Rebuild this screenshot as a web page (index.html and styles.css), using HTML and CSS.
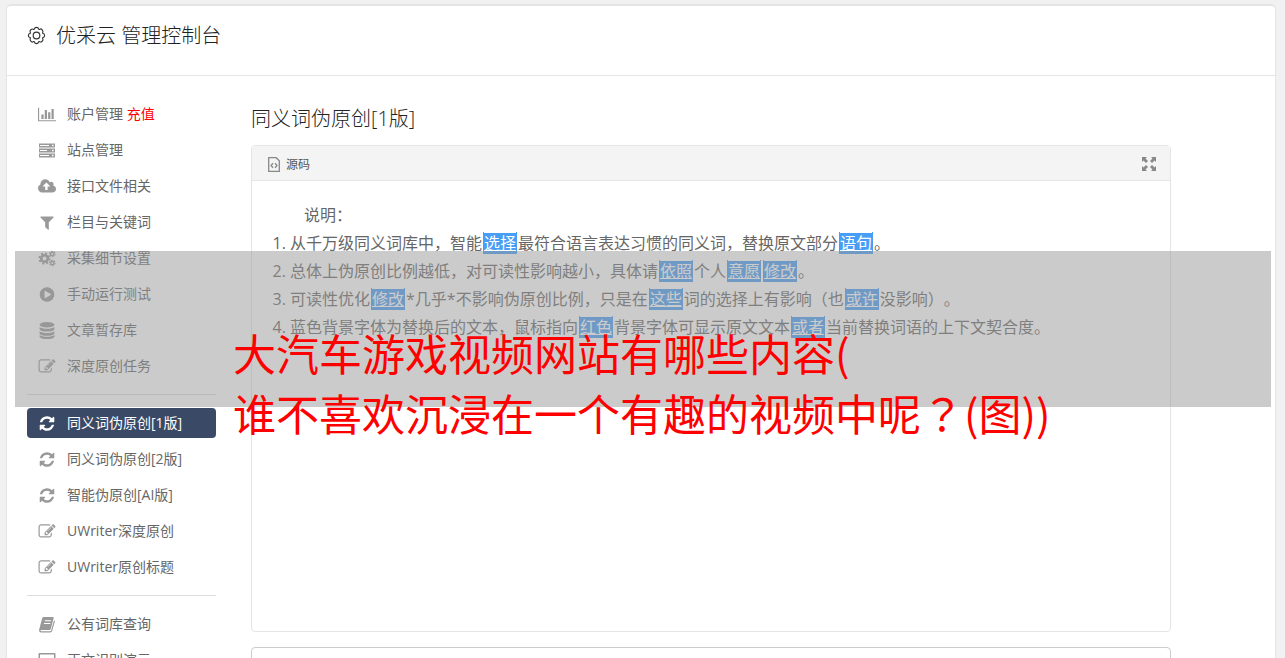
FILE: index.html
```
<!DOCTYPE html>
<html lang="zh-CN">
<head>
  <meta charset="UTF-8">
  <meta name="viewport" content="width=device-width, initial-scale=1.0">
  <title>优采云 管理控制台</title>
  <link rel="stylesheet" href="styles.css">
</head>
<body>
  <svg class="sprite" aria-hidden="true">
    <symbol id="i-chart" viewBox="0 0 2048 1792"><path d="M640 896v512h-256v-512h256zm384-512v1024h-256v-1024h256zm1024 1152v128h-2048v-1536h128v1408h1920zm-640-896v768h-256v-768h256zm384-384v1152h-256v-1152h256z"/></symbol>
    <symbol id="i-server" viewBox="0 0 18 14"><path fill-rule="evenodd" d="M1 0h16v4H1zM2 1.500v1h9v-1zM14 1.200v1.600h1.600V1.200zM1 5h16v4H1zM2 6.500v1h7v-1zM14 6.200v1.600h1.600V6.200zM1 10h16v4H1zM2 11.500v1h9v-1zM14 11.200v1.600h1.600v-1.600z"/></symbol>
    <symbol id="i-cloud" viewBox="-64 0 1920 1792"><path d="M1216 864q0-14-9-23l-352-352q-9-9-23-9t-23 9l-351 351q-10 12-10 24 0 14 9 23t23 9h224v352q0 13 9.500 22.500t22.500 9.500h192q13 0 22.500-9.500t9.500-22.500v-352h224q13 0 22.500-9.500t9.500-22.500zm640 288q0 159-112.500 271.500t-271.500 112.500h-1088q-185 0-316.500-131.500t-131.500-316.500q0-130 70-240t188-165q-2-30-2-43 0-212 150-362t362-150q156 0 285.500 87t188.500 231q71-62 166-62 106 0 181 75t75 181q0 76-41 138 130 31 213.500 135.500t83.500 238.500z"/></symbol>
    <symbol id="i-filter" viewBox="0 0 1792 1792"><path d="M1595 295q17 41-14 70l-493 493v742q0 42-39 59-13 5-25 5-27 0-45-19l-256-256q-19-19-19-45v-486l-493-493q-31-29-14-70 17-39 59-39h1280q42 0 59 39z"/></symbol>
    <symbol id="i-gears" viewBox="0 0 18 16">
      <g fill="none" stroke="currentColor">
        <circle cx="6.500" cy="8" r="3.300" stroke-width="2.600"/>
        <circle cx="6.500" cy="8" r="5.200" stroke-width="1.800" stroke-dasharray="2.040 2.040"/>
        <circle cx="14.300" cy="3.500" r="1.700" stroke-width="1.400"/>
        <circle cx="14.300" cy="3.500" r="2.800" stroke-width="1.100" stroke-dasharray="1.470 1.460"/>
        <circle cx="14.300" cy="12.500" r="1.700" stroke-width="1.400"/>
        <circle cx="14.300" cy="12.500" r="2.800" stroke-width="1.100" stroke-dasharray="1.470 1.460"/>
      </g>
    </symbol>
    <symbol id="i-play" viewBox="0 0 1792 1792"><path d="M896 128q209 0 385.500 103t279.500 279.500 103 385.500-103 385.500-279.500 279.500-385.500 103-385.500-103-279.500-279.500-103-385.500 103-385.500 279.500-279.500 385.500-103zm384 823q32-18 32-55t-32-55l-544-320q-31-19-64-1-32 19-32 56v640q0 37 32 56 16 8 32 8 17 0 32-9z"/></symbol>
    <symbol id="i-database" viewBox="0 0 14 16"><ellipse cx="7" cy="2.600" rx="7" ry="2.600"/><path d="M0 4.600c2.500 2.200 11.500 2.200 14 0v1.900c0 3.300-14 3.300-14 0zM0 8.600c2.500 2.200 11.500 2.200 14 0v1.900c0 3.300-14 3.300-14 0zM0 12.300c2.500 2.200 11.500 2.200 14 0v1.300c0 3.200-14 3.200-14 0z"/></symbol>
    <symbol id="i-edit" viewBox="0 0 1792 1792"><path d="M888 1184l116-116-152-152-116 116v56h96v96h56zm440-720q-16-16-33 1l-350 350q-17 17-1 33t33-1l350-350q17-17 1-33zm80 594v190q0 119-84.500 203.500t-203.500 84.500h-832q-119 0-203.500-84.500t-84.500-203.500v-832q0-119 84.500-203.500t203.500-84.500h832q63 0 117 25 15 7 18 23 3 17-9 29l-49 49q-14 14-32 8-23-6-45-6h-832q-66 0-113 47t-47 113v832q0 66 47 113t113 47h832q66 0 113-47t47-113v-126q0-13 9-22l64-64q15-15 35-7t20 29zm-96-738l288 288-672 672h-288v-288zm444 132l-92 92-288-288 92-92q28-28 68-28t68 28l152 152q28 28 28 68t-28 68z"/></symbol>
    <symbol id="i-refresh" viewBox="0 0 1792 1792"><path d="M1639 1056q0 5-1 7-64 268-268 434.500t-478 166.500q-146 0-282.500-55t-243.500-157l-129 129q-19 19-45 19t-45-19-19-45v-448q0-26 19-45t45-19h448q26 0 45 19t19 45-19 45l-137 137q71 66 161 102t187 36q134 0 250-65t186-179q11-17 53-117 8-23 30-23h192q13 0 22.500 9.500t9.500 22.500zm25-800v448q0 26-19 45t-45 19h-448q-26 0-45-19t-19-45 19-45l138-138q-148-137-349-137-134 0-250 65t-186 179q-11 17-53 117-8 23-30 23h-199q-13 0-22.500-9.500t-9.500-22.500v-7q65-268 270-434.500t480-166.500q146 0 284 55.500t245 156.500l130-129q19-19 45-19t45 19 19 45z"/></symbol>
    <symbol id="i-book" viewBox="0 0 16 16"><path fill-rule="evenodd" d="M5 1h8.500q1 0 .7 1.200L11.600 12q-.4 1.200-1.500 1.200H2.600q-.8 0-.8.500 0 .6.900.6h8.200q.8 0 1-.8l2.700-9.500q1 .4.700 1.500l-2.500 8.700q-.5 1.300-1.700 1.300H2.300Q.3 15.500.5 13.200L3.400 2.400Q3.800 1 5 1zM6 4l-.3 1h6l.3-1zM5.300 6.500l-.3 1h6l.3-1z"/></symbol>
    <symbol id="i-desktop" viewBox="0 0 18 16"><path fill-rule="evenodd" d="M1.500.500h15q1 0 1 1v10q0 1-1 1H11l.5 2h1v1h-7v-1h1l.5-2H1.500q-1 0-1-1v-10q0-1 1-1zM2 2v7.500h14V2z"/></symbol>
    <symbol id="i-gear" viewBox="0 0 20 20">
      <g fill="none" stroke="currentColor" stroke-width="1.200" stroke-linejoin="round">
        <path d="M7.900 3Q8 1.500 10 1.500T12.100 3Q12.500 4 13.500 3.400 14.800 2.600 16 4T16.600 6.500Q16 7.500 17 7.900 18.500 8.200 18.500 10T17 12.100Q16 12.500 16.600 13.500 17.400 14.800 16 16T13.500 16.600Q12.500 16 12.100 17 11.800 18.500 10 18.500T7.900 17Q7.500 16 6.500 16.600 5.200 17.400 4 16T3.400 13.500Q4 12.500 3 12.100 1.500 11.800 1.500 10T3 7.900Q4 7.500 3.400 6.500 2.600 5.200 4 4T6.500 3.400Q7.500 4 7.900 3z"/>
        <circle cx="10" cy="10" r="3.500"/>
      </g>
    </symbol>
    <symbol id="i-code" viewBox="0 0 12 15"><path fill="none" stroke="currentColor" stroke-width="1.300" d="M.7.700h7.500l3.100 3.100v10.500H.7zM5 6.200L3 8.500l2 2.300M7 6.200l2 2.300-2 2.300"/></symbol>
    <symbol id="i-expand" viewBox="0 0 14 14"><path d="M0 0h5L3.500 1.500 6 4 4 6 1.500 3.500 0 5zM14 0v5l-1.500-1.500L10 6 8 4l2.500-2.500L9 0zM0 14V9l1.500 1.500L4 8l2 2-2.500 2.500L5 14zM14 14H9l1.500-1.500L8 10l2-2 2.500 2.500L14 9z"/></symbol>
  </svg>

  <div class="container">
    <header class="header">
      <svg class="gear"><use href="#i-gear"/></svg>
      <h1>优采云 管理控制台</h1>
    </header>
    <div class="content">
      <nav class="sidebar">
        <a class="item" href="#"><svg class="icon"><use href="#i-chart"/></svg><span>账户管理 <span class="recharge">充值</span></span></a>
        <a class="item" href="#"><svg class="icon"><use href="#i-server"/></svg>站点管理</a>
        <a class="item" href="#"><svg class="icon"><use href="#i-cloud"/></svg>接口文件相关</a>
        <a class="item" href="#"><svg class="icon"><use href="#i-filter"/></svg>栏目与关键词</a>
        <a class="item" href="#"><svg class="icon"><use href="#i-gears"/></svg>采集细节设置</a>
        <a class="item" href="#"><svg class="icon"><use href="#i-play"/></svg>手动运行测试</a>
        <a class="item" href="#"><svg class="icon"><use href="#i-database"/></svg>文章暂存库</a>
        <a class="item" href="#"><svg class="icon"><use href="#i-edit"/></svg>深度原创任务</a>
        <hr>
        <a class="item active" href="#"><svg class="icon"><use href="#i-refresh"/></svg>同义词伪原创[1版]</a>
        <a class="item" href="#"><svg class="icon"><use href="#i-refresh"/></svg>同义词伪原创[2版]</a>
        <a class="item" href="#"><svg class="icon"><use href="#i-refresh"/></svg>智能伪原创[AI版]</a>
        <a class="item" href="#"><svg class="icon"><use href="#i-edit"/></svg>UWriter深度原创</a>
        <a class="item" href="#"><svg class="icon"><use href="#i-edit"/></svg>UWriter原创标题</a>
        <hr>
        <a class="item" href="#"><svg class="icon"><use href="#i-book"/></svg>公有词库查询</a>
        <a class="item" href="#"><svg class="icon"><use href="#i-desktop"/></svg>正文识别演示</a>
      </nav>
      <main class="main">
        <h2>同义词伪原创[1版]</h2>
        <div class="editor">
          <div class="toolbar">
            <button class="tool" type="button"><svg class="code"><use href="#i-code"/></svg>源码</button>
            <button class="tool" type="button" aria-label="全屏"><svg class="expand"><use href="#i-expand"/></svg></button>
          </div>
          <div class="text">
            <p>说明：</p>
            <ol>
              <li>从千万级同义词库中，智能<mark>选择</mark>最符合语言表达习惯的同义词，替换原文部分<mark>语句</mark>。</li>
              <li>总体上伪原创比例越低，对可读性影响越小，具体请<mark>依照</mark>个人<mark>意愿</mark><mark>修改</mark>。</li>
              <li>可读性优化<mark>修改</mark>*几乎*不影响伪原创比例，只是在<mark>这些</mark>词的选择上有影响（也<mark>或许</mark>没影响）。</li>
              <li>蓝色背景字体为替换后的文本，鼠标指向<mark>红色</mark>背景字体可显示原文文本<mark>或者</mark>当前替换词语的上下文契合度。</li>
            </ol>
          </div>
        </div>
        <textarea class="source" aria-label="原文"></textarea>
      </main>
    </div>
  </div>

  <div class="caption">
    大汽车游戏视频网站有哪些内容(<br>谁不喜欢沉浸在一个有趣的视频中呢<span class="mark-center" lang="zh-TW">？</span>(图))
  </div>
</body>
</html>
```
FILE: styles.css
```
* {
  box-sizing: border-box;
}
body {
  position: relative;
  height: 100vh;
  margin: 0;
  padding: 5px 10px 0 7px;
  overflow: hidden;
  background-color: #f1f1f1;
  color: #666;
  font-family: "Open Sans", "Noto Sans CJK SC", sans-serif;
  font-size: 14px;
  text-spacing-trim: space-all;
}
.sprite {
  display: none;
}
svg {
  fill: currentColor;
  flex: none;
}
.container {
  background-color: #fff;
  border-top: 1px solid #e5e5e5;
  border-radius: 4px;
  box-shadow: 0 0 0 1px #e5e5e5;
}
.header {
  display: flex;
  align-items: center;
  gap: 10px;
  height: 70px;
  padding: 0 20px 10px;
  border-bottom: 1px solid #e5e5e5;
  color: #333;
}
.gear {
  width: 19px;
  height: 19px;
}
h1, h2 {
  margin: 0;
  color: #222;
  font-size: 20px;
  font-weight: 300;
  line-height: 28px;
}
.content {
  display: flex;
  gap: 35px;
  padding: 23px 20px;
}
.sidebar {
  display: flex;
  flex-direction: column;
  flex: none;
  gap: 6px;
  width: 189px;
}
.sidebar hr {
  width: 100%;
  height: 1px;
  margin: 7px 0;
  border: none;
  background-color: #ddd;
}
.item {
  display: flex;
  align-items: center;
  gap: 11px;
  height: 30px;
  padding: 0 11px;
  border-radius: 4px;
  color: #666;
  line-height: 30px;
  text-decoration: none;
}
.icon {
  width: 18px;
  height: 17px;
  color: #999;
}
.item.active {
  background-color: #3a4a66;
  color: #fff;
}
.item.active .icon {
  color: #fff;
}
.recharge {
  color: #f00;
}
.main {
  flex: 1;
  max-width: 920px;
}
.main h2 {
  margin: 6px 0 12px;
}
.editor {
  min-height: 487px;
  border: 1px solid #e5e5e5;
  border-radius: 4px;
}
.toolbar {
  display: flex;
  align-items: center;
  justify-content: space-between;
  height: 35px;
  padding: 2px 14px 0 16px;
  background-color: #f4f4f4;
  border-bottom: 1px solid #e5e5e5;
}
.tool {
  display: flex;
  align-items: center;
  gap: 6px;
  padding: 0;
  border: none;
  background: none;
  color: #555;
  font: inherit;
  font-size: 12px;
  cursor: pointer;
}
.code {
  width: 12px;
  height: 15px;
  color: #888;
}
.expand {
  width: 14px;
  height: 14px;
  color: #888;
}
.text {
  padding: 20px;
  font-size: 16px;
  line-height: 28px;
}
.text p {
  margin: 0;
  text-indent: 2em;
}
.text ol {
  margin: 0;
  padding-left: 18px;
}
mark {
  margin: 0 1px;
  border: 1px solid #489df5;
  border-width: 0 1px;
  background: linear-gradient(#489df5, #489df5) center / 100% 21px no-repeat;
  color: #fff;
  text-decoration: underline;
}
.source {
  display: block;
  width: 100%;
  height: 120px;
  margin-top: 15px;
  border: 1px solid #ccc;
  border-radius: 4px;
  resize: none;
}
/* translucent band laid over the console */
.caption {
  position: absolute;
  top: 251px;
  left: 15px;
  right: 14px;
  height: 156px;
  padding: 71px 0 0 218px;
  background-color: rgba(151, 151, 151, 0.5);
  color: #f00;
  font-family: "Noto Sans CJK SC", sans-serif;
  font-size: 43px;
  line-height: 60px;
  white-space: nowrap;
}
.mark-center {
  font-family: "Noto Sans CJK TC", sans-serif;
}
```
